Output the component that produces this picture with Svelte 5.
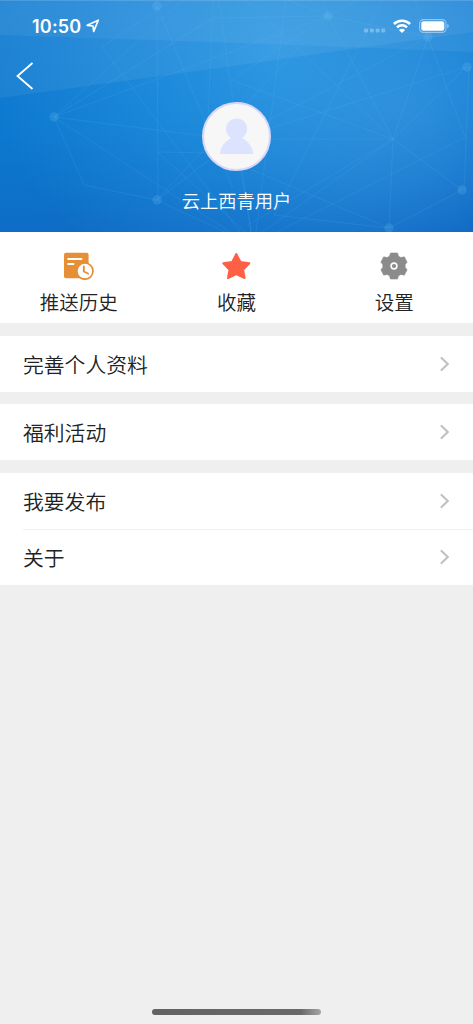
<script lang="ts">
  interface MenuItem {
    label: string;
  }

  const username = '云上西青用户';

  const groups: MenuItem[][] = [
    [{ label: '完善个人资料' }],
    [{ label: '福利活动' }],
    [{ label: '我要发布' }, { label: '关于' }]
  ];

  // Network pattern behind the header: x1, y1, x2, y2
  const links = [
    [157, 6, 158, 200],
    [157, 6, 233, 188],
    [54, 117, 183, 0],
    [102, 47, 172, 0],
    [102, 47, 240, 232],
    [54, 117, 213, 18],
    [213, 18, 328, 16],
    [54, 117, 328, 16],
    [213, 0, 208, 120],
    [219, 0, 251, 232],
    [54, 117, 84, 185],
    [84, 185, 157, 200],
    [54, 117, 230, 232],
    [54, 117, 205, 136],
    [158, 152, 210, 153],
    [158, 152, 245, 232],
    [157, 200, 328, 16],
    [157, 200, 225, 232],
    [157, 200, 213, 157],
    [231, 80, 328, 16],
    [231, 80, 393, 139],
    [328, 16, 393, 139],
    [328, 16, 428, 37],
    [288, 0, 328, 16],
    [323, 0, 328, 16],
    [328, 16, 358, 0],
    [428, 37, 250, 130],
    [428, 37, 393, 139],
    [428, 37, 465, 137],
    [415, 0, 428, 37],
    [466, 67, 240, 138],
    [466, 67, 393, 139],
    [469, 67, 464, 190],
    [246, 0, 393, 139],
    [286, 0, 256, 232],
    [383, 0, 274, 215],
    [393, 139, 270, 139],
    [393, 139, 462, 190],
    [393, 139, 389, 228],
    [393, 139, 262, 232],
    [393, 139, 248, 225],
    [465, 137, 277, 232],
    [250, 169, 389, 228],
    [274, 215, 389, 228],
    [389, 228, 462, 190],
    [240, 165, 251, 232]
  ];

  const nodes = [
    [157, 6],
    [54, 117],
    [157, 200],
    [328, 16],
    [428, 37],
    [467, 67],
    [462, 190],
    [389, 228]
  ];
</script>

<div class="page">
  <header class="header">
    <svg class="pattern" viewBox="0 0 473 232" aria-hidden="true">
      <path d="M0 0H473V52L240 43L0 35Z" fill="#fff" fill-opacity=".055" />
      <path d="M0 0H473V32L345 50L233 66L0 98Z" fill="#fff" fill-opacity=".06" />
      <g stroke="#7fc6f5" stroke-opacity=".12" stroke-width="1">
        {#each links as [x1, y1, x2, y2]}
          <line {x1} {y1} {x2} {y2} />
        {/each}
      </g>
      <g fill="#7fc6f5" fill-opacity=".18">
        {#each nodes as [cx, cy]}
          <circle {cx} {cy} r="4.7" />
        {/each}
      </g>
      <rect width="473" height="1" fill="#fff" fill-opacity=".14" />
    </svg>

    <div class="status-bar">
      <div class="clock">
        <span>10:50</span>
        <svg width="14" height="14" viewBox="0 0 14 14">
          <path d="M1.2 6.3L12.3 1.2L7.7 12.4L7 7Z" fill="none" stroke="#fff" stroke-width="1.7" stroke-linejoin="round" />
        </svg>
      </div>
      <div class="indicators">
        <svg width="22" height="5" viewBox="0 0 22 5" fill="#fff" fill-opacity=".3">
          <rect x="0" y=".5" width="4" height="4" rx="1" />
          <rect x="5.8" y=".5" width="4" height="4" rx="1" />
          <rect x="11.6" y=".5" width="4" height="4" rx="1" />
          <rect x="17.2" y=".5" width="4" height="4" rx="1" />
        </svg>
        <svg class="wifi" width="18" height="14" viewBox="0 0 18 14">
          <path d="M.9 5C5.4 .6 12.6 .6 17.1 5M4 8.3C6.8 5.6 11.2 5.6 14 8.3" fill="none" stroke="#fff" stroke-width="2.5" />
          <path d="M9 13.9L5.9 10.9C7.6 9.4 10.4 9.4 12.1 10.9Z" fill="#fff" />
        </svg>
        <svg class="battery" width="30" height="14" viewBox="0 0 30 14">
          <rect x=".6" y=".6" width="26.4" height="12.8" rx="3.8" fill="none" stroke="#fff" stroke-opacity=".45" stroke-width="1.1" />
          <rect x="2.3" y="2.2" width="23" height="9.6" rx="2.2" fill="#fff" />
          <path d="M28.4 4.8C30.1 5.6 30.1 8.4 28.4 9.2Z" fill="#fff" fill-opacity=".5" />
        </svg>
      </div>
    </div>

    <button class="back" aria-label="返回">
      <svg width="18" height="28" viewBox="0 0 18 28">
        <path d="M16.5 1L1.5 14L16.5 27" fill="none" stroke="#fff" stroke-width="1.8" />
      </svg>
    </button>

    <div class="profile">
      <div class="avatar">
        <svg width="36" height="38" viewBox="0 0 36 38" fill="#dbe3ff">
          <circle cx="17.6" cy="11" r="10.6" />
          <path d="M.9 36C1.8 28 6.6 23 12.1 20H23.1C28.6 23 33.4 28 34.3 36Z" />
        </svg>
      </div>
      <div class="username">{username}</div>
    </div>
  </header>

  <nav class="actions">
    <div class="action">
      <svg width="32" height="28" viewBox="0 0 32 28">
        <rect x="1" y=".7" width="24.6" height="25.6" rx="2" fill="#e78f36" />
        <path d="M5.2 7H18.5M5.2 12H10.5" stroke="#fff" stroke-width="1.9" stroke-linecap="round" />
        <circle cx="21.9" cy="19.1" r="8.1" fill="#fff" stroke="#e78f36" stroke-width="1.7" />
        <path d="M20.8 14.5V19.5L25.1 21.5" fill="none" stroke="#e78f36" stroke-width="1.9" stroke-linecap="round" stroke-linejoin="round" />
      </svg>
      <span>推送历史</span>
    </div>
    <div class="action">
      <svg width="32" height="28" viewBox="0 0 32 28">
        <path d="M16.3 2L20.4 9.9L29.3 11.3L23.1 17.7L24.6 26L16.3 22L8 26L9.5 17.7L3.3 11.3L12.2 9.9Z" fill="#ff6045" stroke="#ff6045" stroke-width="2" stroke-linejoin="round" />
      </svg>
      <span>收藏</span>
    </div>
    <div class="action">
      <svg width="32" height="28" viewBox="0 0 32 28">
        <path d="M12.5 1H19.5L20.5 4.2L23 5.6L26.3 4.8L29.1 10.2L27.2 12.5V15.5L29.1 17.8L26.3 23.2L23 22.4L20.5 23.8L19.5 27H12.5L11.5 23.8L9 22.4L5.7 23.2L2.9 17.8L4.8 15.5V12.5L2.9 10.2L5.7 4.8L9 5.6L11.5 4.2Z" fill="#8b8b8b" stroke="#8b8b8b" stroke-width=".6" stroke-linejoin="round" />
        <circle cx="16" cy="14" r="2.9" fill="none" stroke="#fff" stroke-width="1.6" />
      </svg>
      <span>设置</span>
    </div>
  </nav>

  {#each groups as items}
    <section class="group">
      {#each items as item}
        <div class="row">
          <span>{item.label}</span>
          <svg width="10" height="16" viewBox="0 0 10 16">
            <path d="M1.5 1.9L7.8 8L1.5 14.1" fill="none" stroke="#c0c0c0" stroke-width="2.1" stroke-linecap="round" />
          </svg>
        </div>
      {/each}
    </section>
  {/each}

  <div class="home-indicator"></div>
</div>

<style>
  :global(body) {
    margin: 0;
    background: #efefef;
  }

  .page {
    display: flex;
    flex-direction: column;
    box-sizing: border-box;
    height: 1024px;
    padding-bottom: 9px;
    background: #efefef;
    color: #222;
    font-family: 'Noto Sans CJK SC', sans-serif;
    font-weight: 350;
  }

  .header {
    position: relative;
    height: 232px;
    flex: none;
    overflow: hidden;
    background:
      radial-gradient(ellipse 200px 150px at 84% 46%, rgba(80, 160, 228, 0.38), transparent),
      radial-gradient(ellipse 290px 260px at 58% 20%, rgba(56, 166, 236, 0.65), transparent),
      linear-gradient(175deg, #137bd1 0%, #0c78cf 50%, #0f68c2 100%);
  }

  .pattern {
    position: absolute;
    inset: 0;
    width: 100%;
    height: 100%;
  }

  .status-bar {
    position: relative;
    display: flex;
    justify-content: space-between;
    height: 52px;
    padding: 0 24px 0 32px;
    color: #fff;
  }

  .clock,
  .indicators {
    display: flex;
    align-items: center;
  }

  .clock {
    gap: 5px;
    font-family: Inter, sans-serif;
    font-size: 18px;
    font-weight: 600;
    letter-spacing: 0.2px;
  }

  .indicators svg:first-child {
    margin-top: 9px;
  }

  .wifi {
    margin: 0 8px 0 7px;
  }

  .back {
    position: relative;
    display: block;
    margin: 10px 0 0 16px;
    padding: 0;
    border: 0;
    background: none;
    line-height: 0;
  }

  .profile {
    position: relative;
    display: flex;
    flex-direction: column;
    align-items: center;
    margin-top: 12px;
  }

  .avatar {
    display: flex;
    align-items: center;
    justify-content: center;
    box-sizing: border-box;
    width: 69px;
    height: 69px;
    border: 2px solid #d5d8fb;
    border-radius: 50%;
    background: #f7f7f7;
  }

  .username {
    margin-top: 16px;
    color: #fff;
    font-size: 18.3px;
    line-height: 27px;
  }

  .actions {
    display: grid;
    grid-template-columns: repeat(3, 1fr);
    height: 91px;
    flex: none;
    background: #fff;
  }

  .action {
    display: flex;
    flex-direction: column;
    align-items: center;
    padding-top: 20px;
    font-size: 19.5px;
    line-height: 28px;
  }

  .action span {
    margin-top: 8px;
  }

  .group {
    margin-top: 12.5px;
    background: #fff;
  }

  .row {
    position: relative;
    display: flex;
    align-items: center;
    justify-content: space-between;
    height: 56px;
    padding: 0 23px;
    font-size: 20.8px;
  }

  .row + .row {
    height: 56.8px;
  }

  .row + .row::before {
    content: '';
    position: absolute;
    top: 0;
    right: 0;
    left: 23px;
    height: 1px;
    background: #f0f0f0;
  }

  .home-indicator {
    width: 169px;
    height: 6px;
    margin: auto auto 0;
    border-radius: 3px;
    background: linear-gradient(90deg, #636363 0%, #696969 88%, #a5a5a5 100%);
  }
</style>
